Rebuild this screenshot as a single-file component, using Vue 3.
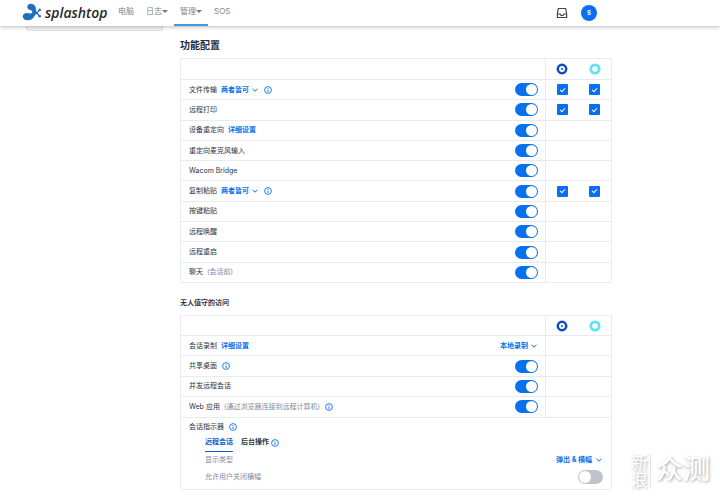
<script setup>
import { ref } from 'vue'

const navItems = [
  { label: '电脑' },
  { label: '日志', menu: true },
  { label: '管理', menu: true, active: true },
  { label: 'SOS' }
]

const features = ref([
  { id: 'file', label: '文件传输', choice: '两者皆可', info: true, on: true, roles: [true, true] },
  { id: 'print', label: '远程打印', on: true, roles: [true, true] },
  { id: 'device', label: '设备重定向', link: '详细设置', on: true },
  { id: 'mic', label: '重定向麦克风输入', on: true },
  { id: 'wacom', label: 'Wacom Bridge', on: true },
  { id: 'copy', label: '复制粘贴', choice: '两者皆可', info: true, on: true, roles: [true, true] },
  { id: 'keys', label: '按键粘贴', on: true },
  { id: 'wake', label: '远程唤醒', on: true },
  { id: 'reboot', label: '远程重启', on: true },
  { id: 'chat', label: '聊天', note: '(会话前)', on: true }
])

const unattended = ref([
  { id: 'record', label: '会话录制', link: '详细设置', mode: '本地录制' },
  { id: 'share', label: '共享桌面', info: true, on: true },
  { id: 'concurrent', label: '并发远程会话', on: true },
  { id: 'web', label: 'Web 应用', note: '(通过浏览器连接到远程计算机)', info: true, on: true }
])

const tab = ref('session')
const allowClose = ref(false)
</script>

<template>
  <svg class="defs" aria-hidden="true">
    <symbol id="chevron" viewBox="0 0 8 8"><path d="M1.500 2.800 4 5.200 6.500 2.800" fill="none" stroke="currentColor" stroke-width="1" /></symbol>
    <symbol id="info" viewBox="0 0 8 8">
      <circle cx="4" cy="4" r="3.400" fill="none" stroke="currentColor" stroke-width=".9" />
      <path d="M4 3.500V6M4 2v.9" stroke="currentColor" stroke-width=".9" />
    </symbol>
    <symbol id="owner" viewBox="0 0 12 12">
      <circle cx="6" cy="6" r="4.200" fill="#fff" stroke="#0b4bc4" stroke-width="2.500" />
      <circle cx="6" cy="6" r="1" fill="#0b4bc4" />
    </symbol>
    <symbol id="member" viewBox="0 0 12 12"><circle cx="6" cy="6" r="4.200" fill="#fff" stroke="#62e0f5" stroke-width="2.800" /></symbol>
  </svg>

  <header class="topbar">
    <a class="brand" href="#" aria-label="splashtop">
      <svg class="mark" viewBox="0 0 20 18" aria-hidden="true">
        <g fill="#1f6fbe">
          <path d="M5.300 3.600C5.500 1.200 7.900.2 10.300.9c2.600.8 3.700 3 3.600 5.200 0 1.400.3 2.400 1.200 3.100.5.500.4 1.300-.2 1.600-1.500.6-2.100 1.700-3.100 3.200-1.400 2.200-3.500 3.400-6.300 3.300C2.700 17.200.8 15.700.8 13.500c0-2.100 1.700-3.500 3.900-3.500 1.800 0 3.300.9 4.700.3 1.200-.6 1.200-2.200.1-2.700C7.300 6.800 5.100 6.200 5.300 3.600z" />
          <circle cx="17.800" cy="6.800" r="1.200" />
          <circle cx="17.700" cy="13.300" r="1.300" />
        </g>
        <path d="M14 9.900c1.900 0 2.200-2.200 3.600-3M14 10c1.900.1 2.200 2.200 3.500 3.100" fill="none" stroke="#1f6fbe" stroke-width="1.300" />
      </svg>
      <span class="word">splashtop</span>
    </a>
    <nav>
      <a v-for="n in navItems" :key="n.label" href="#" :class="{ active: n.active }">{{ n.label }}<i v-if="n.menu" class="caret"></i></a>
    </nav>
    <div class="tools">
      <button class="inbox" aria-label="收件箱">
        <svg viewBox="0 0 12 12" aria-hidden="true"><path d="M2.300 1.500h7.400l.9 5v4H1.400v-4zM1.400 7h2.700c.3 1.200 1 1.700 1.900 1.700S7.600 8.200 7.900 7h2.700" fill="none" stroke="#444" stroke-width="1.200" stroke-linejoin="round" /></svg>
      </button>
      <button class="avatar">S</button>
    </div>
  </header>

  <div class="page">
    <aside class="side"></aside>
    <main>
      <h1>功能配置</h1>
      <table class="grid features">
        <thead>
          <tr>
            <th></th>
            <th class="roles"><div class="pair"><svg><use href="#owner" /></svg><svg><use href="#member" /></svg></div></th>
          </tr>
        </thead>
        <tbody>
          <tr v-for="f in features" :key="f.id">
            <td>
              <div class="line">
                <label :for="f.id">{{ f.label }}</label>
                <span v-if="f.note" class="note">{{ f.note }}</span>
                <a v-if="f.link" href="#">{{ f.link }}</a>
                <span v-if="f.choice" class="pick">
                  <select :aria-label="f.label + '方向'"><option>{{ f.choice }}</option></select>
                  <svg><use href="#chevron" /></svg>
                </span>
                <svg v-if="f.info" class="info"><use href="#info" /></svg>
                <input :id="f.id" v-model="f.on" class="switch" type="checkbox">
              </div>
            </td>
            <td class="roles">
              <div v-if="f.roles" class="pair">
                <input v-for="(r, i) in f.roles" :key="i" v-model="f.roles[i]" class="tick" type="checkbox" :aria-label="f.label + (i ? '成员' : '所有者')">
              </div>
            </td>
          </tr>
        </tbody>
      </table>

      <h2>无人值守的访问</h2>
      <table class="grid unattended">
        <thead>
          <tr>
            <th></th>
            <th class="roles"><div class="pair"><svg><use href="#owner" /></svg><svg><use href="#member" /></svg></div></th>
          </tr>
        </thead>
        <tbody>
          <tr v-for="f in unattended" :key="f.id">
            <td>
              <div class="line">
                <label :for="f.id">{{ f.label }}</label>
                <span v-if="f.note" class="note">{{ f.note }}</span>
                <a v-if="f.link" href="#">{{ f.link }}</a>
                <svg v-if="f.info" class="info"><use href="#info" /></svg>
                <span v-if="f.mode" class="pick end">
                  <select :id="f.id"><option>{{ f.mode }}</option></select>
                  <svg><use href="#chevron" /></svg>
                </span>
                <input v-else :id="f.id" v-model="f.on" class="switch" type="checkbox">
              </div>
            </td>
            <td class="roles"></td>
          </tr>
          <tr>
            <td colspan="2" class="indicator">
              <div class="line"><span>会话指示器</span><svg class="info"><use href="#info" /></svg></div>
              <div class="sub">
                <div class="tabs">
                  <button :class="{ current: tab === 'session' }" @click="tab = 'session'">远程会话</button>
                  <button :class="{ current: tab === 'background' }" @click="tab = 'background'">后台操作</button>
                  <svg class="info"><use href="#info" /></svg>
                </div>
                <div class="option">
                  <label for="display">显示类型</label>
                  <span class="pick end">
                    <select id="display"><option>弹出 &amp; 横幅</option></select>
                    <svg><use href="#chevron" /></svg>
                  </span>
                </div>
                <div class="option">
                  <label for="close">允许用户关闭横幅</label>
                  <input id="close" v-model="allowClose" class="switch large" type="checkbox">
                </div>
              </div>
            </td>
          </tr>
        </tbody>
      </table>
    </main>
  </div>

  <div class="watermark"><span class="small">新浪</span><span class="big">众测</span></div>
</template>

<style>
body { margin: 0; background: #fff; overflow: hidden; }
</style>

<style scoped>
.defs { position: absolute; width: 0; height: 0; }
.topbar, .page { font: 7px/12px Inter, "Noto Sans CJK SC", sans-serif; color: #2d3444; }
a { color: #0670ee; text-decoration: none; }
button, select, input { margin: 0; font: inherit; }
button { border: 0; padding: 0; background: none; }

.topbar { position: relative; display: flex; height: 26px; padding: 0 123px 0 22px; background: #fff; box-shadow: 0 1px 4px rgba(0, 0, 0, .28); }
.brand { display: flex; align-items: center; gap: 3px; width: 90px; color: #292929; }
.mark { flex: none; width: 20px; height: 18px; margin-bottom: 3px; }
.word { font: italic 600 14px/20px "Open Sans", sans-serif; }
nav { display: flex; }
nav a { box-sizing: border-box; display: flex; align-items: center; height: 26px; padding: 0 6px 2px; border-bottom: 2px solid transparent; font-size: 8px; color: #858585; }
nav a.active { border-color: #4997d2; }
.caret { border: 3px solid transparent; border-top-color: #777; border-bottom: 0; }
.tools { display: flex; align-items: center; gap: 13px; margin-left: auto; }
.inbox, .inbox svg { display: block; width: 12px; height: 12px; }
.avatar { width: 16px; height: 16px; border-radius: 50%; background: #0670ee; color: #fff; font-size: 6px; font-weight: 700; }

.page { display: flex; align-items: flex-start; gap: 17px; padding: 0 108px 0 26px; }
.side { box-sizing: border-box; flex: none; width: 137px; height: 5px; border: 1px solid #e2e2e2; border-top: 0; border-radius: 0 0 3px 3px; background: #f3f3f3; }
main { flex: 1; }
h1 { margin: 11px 0 4px; font-size: 10px; line-height: 17px; color: #202b40; }
h2 { margin: 13px 0 5px; font-size: 7px; line-height: 14px; }

.grid { width: 100%; border: 1px solid #e7ebef; border-radius: 2px; border-collapse: separate; border-spacing: 0; }
.features { height: 225px; }
.unattended { height: 175px; }
td, th { height: 19px; padding: 0; border-bottom: 1px solid #e7ebef; }
.features th { height: 20px; }
tbody tr:last-child td { border-bottom: 0; }
.roles { width: 65px; border-left: 1px solid #e7ebef; }
.pair { display: flex; align-items: center; justify-content: space-around; }
.pair svg { width: 12px; height: 12px; }
.line { display: flex; align-items: center; gap: 4px; height: 14px; padding: 0 7px 0 8px; }
.note, .option label { color: #858ba0; }
.line a, .pick { font-weight: 700; }
.info { flex: none; width: 8px; height: 8px; margin-left: 1px; color: #0670ee; }
.pick { display: inline-grid; align-items: center; color: #0670ee; }
.pick select { grid-area: 1 / 1; appearance: none; border: 0; padding: 0 10px 0 0; background: none; color: inherit; }
.pick svg { grid-area: 1 / 1; justify-self: end; width: 8px; height: 8px; pointer-events: none; }
.end { margin-left: auto; }

.switch { appearance: none; flex: none; display: flex; width: 23px; height: 13px; margin-left: auto; padding: 1px; box-sizing: border-box; border-radius: 7px; background: #bfc4cc; }
.switch::before { content: ""; width: 11px; height: 11px; border-radius: 50%; background: #fff; }
.switch:checked { justify-content: flex-end; background: #0670ee; }
.switch.large { width: 25px; height: 14px; }
.switch.large::before { width: 12px; height: 12px; }
.tick { appearance: none; display: grid; place-items: center; width: 11px; height: 11px; border-radius: 1px; background: #fff; }
.tick:checked { background: #0670ee; }
.tick:checked::before { content: ""; width: 2px; height: 4px; margin-bottom: 1px; border: solid #fff; border-width: 0 1px 1px 0; transform: rotate(42deg); }

.indicator { vertical-align: top; padding: 2px 0; }
.sub { padding: 0 8px 0 24px; }
.tabs { display: flex; align-items: center; height: 18px; }
.tabs button { box-sizing: border-box; height: 18px; margin-right: 8px; border-bottom: 1px solid transparent; font-weight: 700; color: #2d3444; }
.tabs button:nth-child(2) { margin-right: 1px; }
.tabs .current { border-color: #0b5fcc; color: #0b5fcc; }
.option { display: flex; align-items: center; height: 17px; }

.watermark { position: absolute; right: 10px; bottom: 12px; display: flex; align-items: flex-start; gap: 5px; font-family: "Noto Sans CJK SC", sans-serif; color: #fff; text-shadow: 1px 1px 3px rgba(0, 0, 0, .36); }
.small { padding-right: 2px; border-right: 1px solid #e4e4e4; writing-mode: vertical-rl; font-size: 17px; line-height: 18px; }
.big { font-size: 27px; line-height: 28px; font-weight: 500; }
</style>
